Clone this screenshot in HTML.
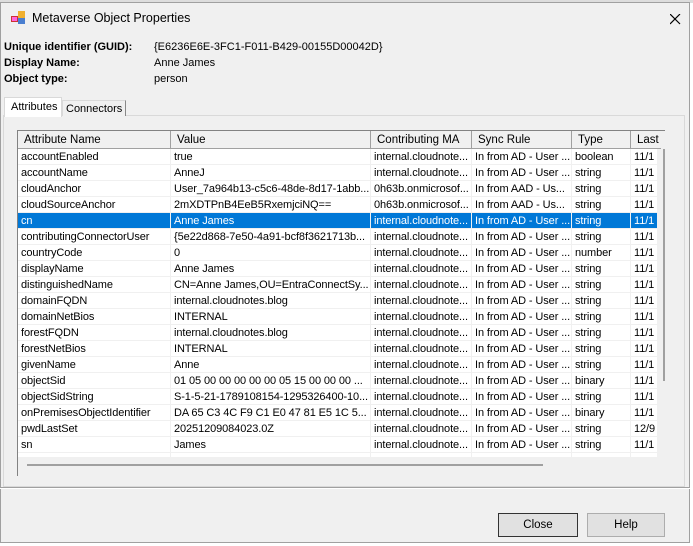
<!DOCTYPE html>
<html><head><style>
*{box-sizing:border-box;margin:0;padding:0}
body{width:693px;height:546px;background:#fff;position:relative;overflow:hidden;font-family:"Liberation Sans",sans-serif;font-size:11px;color:#000}
.abs{position:absolute}
#win{left:0;top:2px;width:690px;height:541px;background:#f0f0f0;border:1px solid #a0a0a0}
#title{left:0;top:0;width:688px;height:31px;background:#f0f0f0}
.lbl{font-weight:bold;font-size:11px}
#panel{left:3px;top:115px;width:682px;height:372px;border:1px solid #d9d9d9;background:#f0f0f0}
#list{left:17px;top:130px;width:648px;height:346px;border:1px solid #828282;border-right:none;border-bottom:none;background:#f0f0f0;overflow:hidden}
.hdr{position:absolute;top:0;height:18px;background:#f0f0f0;border-right:1px solid #a0a0a0;border-bottom:1px solid #a0a0a0;padding-left:6px;line-height:18px;font-size:11.5px;white-space:nowrap;overflow:hidden}
.row{position:absolute;left:0;width:640px;height:16px;background:#fff;border-bottom:1px solid #f0f0f0;font-size:11px;line-height:17px;white-space:nowrap;letter-spacing:-0.1px}
.row span{position:absolute;top:0;overflow:hidden;padding-left:3px;height:16px;border-right:1px solid #f0f0f0}
.sel{background:#0078d7;color:#fff}
.btn{position:absolute;top:513px;height:24px;border:1px solid #adadad;background:#e1e1e1;text-align:center;line-height:22px;font-size:11.5px}
</style></head><body>
<div class="abs" style="left:0;top:0;width:693px;height:3px;background:#ddd"></div>
<div class="abs" id="win">
 <div class="abs" id="title">
  <svg class="abs" style="left:10px;top:8px" width="16" height="14"><rect x="0" y="5" width="7" height="6" fill="#c33"/><rect x="7" y="0" width="7" height="7" fill="#f0b030"/><rect x="7" y="7" width="7" height="6" fill="#4a7fd0"/><rect x="1" y="6" width="5" height="4" fill="#f6d"/></svg>
  <div class="abs" style="left:31px;top:8px;font-size:12.5px">Metaverse Object Properties</div>
  <svg class="abs" style="left:669px;top:11px" width="11" height="11"><path d="M0 0L10 10M10 0L0 10" stroke="#000" stroke-width="1.2"/></svg>
 </div>
</div>
<div class="abs lbl" style="left:4px;top:41px">Unique identifier (GUID):</div>
<div class="abs" style="left:154px;top:41px">{E6236E6E-3FC1-F011-B429-00155D00042D}</div>
<div class="abs lbl" style="left:4px;top:57px">Display Name:</div>
<div class="abs" style="left:154px;top:57px">Anne James</div>
<div class="abs lbl" style="left:4px;top:73px">Object type:</div>
<div class="abs" style="left:154px;top:73px">person</div>
<div class="abs" id="panel"></div>
<div class="abs" style="left:4px;top:97px;width:58px;height:20px;background:#fff;border:1px solid #d9d9d9;border-bottom:none;padding:3px 0 0 6px">Attributes</div>
<div class="abs" style="left:62px;top:100px;width:64px;height:16px;background:#f0f0f0;border:1px solid #d9d9d9;border-right:1px solid #888;border-bottom:none;padding:2px 0 0 3px">Connectors</div>
<div class="abs" id="list">
 <div class="hdr" style="left:0;width:153px">Attribute Name</div>
 <div class="hdr" style="left:153px;width:200px">Value</div>
 <div class="hdr" style="left:353px;width:101px">Contributing MA</div>
 <div class="hdr" style="left:454px;width:100px">Sync Rule</div>
 <div class="hdr" style="left:554px;width:59px">Type</div>
 <div class="hdr" style="left:613px;width:30px;border-right:none">Last</div>
 <div id="rows"></div>
 <div class="abs" style="left:645px;top:18px;width:4px;height:232px;background:#a0a0a0"></div>
 <div class="abs" style="left:9px;top:333px;width:516px;height:2px;background:#a0a0a0"></div>
</div>
<div class="abs" style="left:0;top:487px;width:690px;height:1px;background:#a0a0a0"></div>
<div class="abs" style="left:0;top:488px;width:690px;height:1px;background:#fff"></div>
<div class="btn" style="left:498px;width:80px;border:1px solid #333">Close</div>
<div class="btn" style="left:587px;width:78px">Help</div>
<script>
var d=[["accountEnabled","true","internal.cloudnote...","In from AD - User ...","boolean","11/1"],
["accountName","AnneJ","internal.cloudnote...","In from AD - User ...","string","11/1"],
["cloudAnchor","User_7a964b13-c5c6-48de-8d17-1abb...","0h63b.onmicrosof...","In from AAD - Us...","string","11/1"],
["cloudSourceAnchor","2mXDTPnB4EeB5RxemjciNQ==","0h63b.onmicrosof...","In from AAD - Us...","string","11/1"],
["cn","Anne James","internal.cloudnote...","In from AD - User ...","string","11/1"],
["contributingConnectorUser","{5e22d868-7e50-4a91-bcf8f3621713b...","internal.cloudnote...","In from AD - User ...","string","11/1"],
["countryCode","0","internal.cloudnote...","In from AD - User ...","number","11/1"],
["displayName","Anne James","internal.cloudnote...","In from AD - User ...","string","11/1"],
["distinguishedName","CN=Anne James,OU=EntraConnectSy...","internal.cloudnote...","In from AD - User ...","string","11/1"],
["domainFQDN","internal.cloudnotes.blog","internal.cloudnote...","In from AD - User ...","string","11/1"],
["domainNetBios","INTERNAL","internal.cloudnote...","In from AD - User ...","string","11/1"],
["forestFQDN","internal.cloudnotes.blog","internal.cloudnote...","In from AD - User ...","string","11/1"],
["forestNetBios","INTERNAL","internal.cloudnote...","In from AD - User ...","string","11/1"],
["givenName","Anne","internal.cloudnote...","In from AD - User ...","string","11/1"],
["objectSid","01 05 00 00 00 00 00 05 15 00 00 00 ...","internal.cloudnote...","In from AD - User ...","binary","11/1"],
["objectSidString","S-1-5-21-1789108154-1295326400-10...","internal.cloudnote...","In from AD - User ...","string","11/1"],
["onPremisesObjectIdentifier","DA 65 C3 4C F9 C1 E0 47 81 E5 1C 5...","internal.cloudnote...","In from AD - User ...","binary","11/1"],
["pwdLastSet","20251209084023.0Z","internal.cloudnote...","In from AD - User ...","string","12/9"],
["sn","James","internal.cloudnote...","In from AD - User ...","string","11/1"],
["","","","","",""]];
var L=[0,153,353,454,554,613],W=[153,200,101,100,59,27],h="";
d.forEach(function(r,i){h+='<div class="row'+(i==4?' sel':'')+'" style="top:'+(18+i*16)+'px;height:'+(i==19?5:16)+'px">';
r.forEach(function(c,j){h+='<span style="left:'+L[j]+'px;width:'+W[j]+'px">'+c+'</span>'});h+='</div>'});
document.getElementById('rows').innerHTML=h;
</script>
</body></html>
